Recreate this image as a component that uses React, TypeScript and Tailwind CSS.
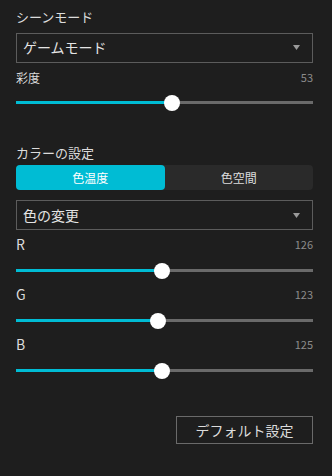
import { useState } from "react";

const font = { fontFamily: '"Noto Sans CJK JP", "Noto Sans", sans-serif' };

function Select({ label }: { label: string }) {
  return (
    <div className="flex h-[30px] items-center justify-between border border-[#5c5c5c] pl-[6px] pr-[12px]">
      <span className="text-[14px] text-[#e4e4e4]">{label}</span>
      <svg width="7" height="5" viewBox="0 0 7 5">
        <path d="M0 0H7L3.5 5Z" fill="#9a9a9a" />
      </svg>
    </div>
  );
}

function Slider({ label, value, pos, bold }: { label: string; value: number; pos: number; bold?: boolean }) {
  return (
    <div>
      <div className="flex items-center justify-between">
        <span className={`text-[#dcdcdc] ${bold ? "text-[14px]" : "text-[12px]"}`}>{label}</span>
        <span className="text-[11px] text-[#8c8c8c]">{value}</span>
      </div>
      <div className="relative mt-[8px] h-[16px]">
        <div className="absolute top-[6px] h-[3px] w-full bg-[#6a6a6a]" />
        <div className="absolute top-[6px] h-[3px] bg-[#00bcd4]" style={{ width: pos }} />
        <div
          className="absolute top-0 h-[16px] w-[16px] rounded-full bg-white"
          style={{ left: pos - 8 }}
        />
      </div>
    </div>
  );
}

export default function App() {
  const [tab, setTab] = useState(0);
  return (
    <div className="h-[476px] w-[332px] bg-[#1e1e1e] pl-[16px] pr-[19px] pt-[7px]" style={font}>
      <div className="text-[13px] text-[#dcdcdc]">シーンモード</div>
      <div className="mt-[6px]">
        <Select label="ゲームモード" />
      </div>
      <div className="mt-[6px]">
        <Slider label="彩度" value={53} pos={156} />
      </div>

      <div className="mt-[32px] text-[13px] text-[#dcdcdc]">カラーの設定</div>
      <div className="mt-[3px] flex h-[25px] rounded-[4px] bg-[#2a2a2a]">
        {["色温度", "色空間"].map((t, i) => (
          <button
            key={t}
            onClick={() => setTab(i)}
            className={`flex-1 rounded-[4px] text-[12px] ${
              tab === i ? "bg-[#00bcd4] text-white" : "text-[#dcdcdc]"
            }`}
          >
            {t}
          </button>
        ))}
      </div>
      <div className="mt-[10px]">
        <Select label="色の変更" />
      </div>
      <div className="mt-[4px] flex flex-col gap-[5px]">
        <Slider label="R" value={126} pos={146} bold />
        <Slider label="G" value={123} pos={142} bold />
        <Slider label="B" value={125} pos={146} bold />
      </div>

      <div className="mt-[37px] flex justify-end">
        <button className="h-[28px] w-[137px] border border-[#6a6a6a] text-[14px] text-[#dcdcdc]">
          デフォルト設定
        </button>
      </div>
    </div>
  );
}
